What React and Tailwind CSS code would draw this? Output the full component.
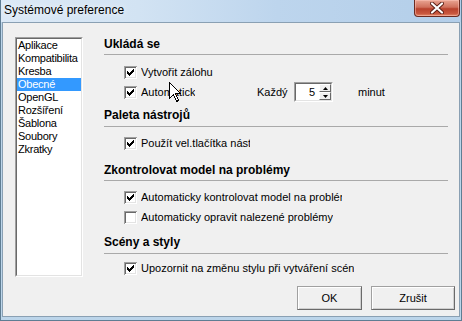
import React from "react";

const CHECK = [
  "......X",
  ".....XX",
  "X...XXX",
  "XX.XXX.",
  "XXXXX..",
  ".XXX...",
  "..X....",
];

function CheckBox({ checked }) {
  const rects = [];
  if (checked) {
    CHECK.forEach((row, y) =>
      row.split("").forEach((c, x) => {
        if (c === "X")
          rects.push(<rect key={`${x}-${y}`} x={3 + x} y={3 + y} width="1" height="1" fill="#000" />);
      })
    );
  }
  return (
    <svg width="13" height="13" viewBox="0 0 13 13" className="shrink-0" shapeRendering="crispEdges">
      <rect x="0" y="0" width="13" height="13" fill="#ffffff" />
      <path d="M0.5 12.5 V0.5 H12.5" stroke="#a0a0a0" fill="none" />
      <path d="M1.5 11.5 V1.5 H11.5" stroke="#696969" fill="none" />
      <path d="M1.5 11.5 H11.5 V1.5" stroke="#e3e3e3" fill="none" />
      {rects}
    </svg>
  );
}

function Heading({ children, mt, lineMt }) {
  return (
    <>
      <div className={`h-[14px] leading-[14px] text-[12px] font-bold whitespace-nowrap ${mt}`}>{children}</div>
      <div className={`h-px bg-[#a9a9a9] ${lineMt}`} />
    </>
  );
}

function Row({ checked, children, mt, labelW }) {
  return (
    <div className={`flex items-center h-[16px] pl-[20px] ${mt}`}>
      <CheckBox checked={checked} />
      <span className={`ml-[4px] leading-[16px] whitespace-nowrap overflow-hidden ${labelW}`}>{children}</span>
    </div>
  );
}

function Button({ children, w }) {
  return (
    <div
      className={`h-[24px] ${w} flex items-center justify-center bg-[#f0f0f0] border border-[#a0a0a0] border-r-[#6a6a6a] border-b-[#6a6a6a] shadow-[inset_1px_1px_0_#ffffff,inset_-1px_-1px_0_#cfcfcf]`}
    >
      {children}
    </div>
  );
}

export default function App() {
  const items = ["Aplikace", "Kompatibilita", "Kresba", "Obecné", "OpenGL", "Rozšíření", "Šablona", "Soubory", "Zkratky"];
  return (
    <div className="relative w-[462px] h-[321px] overflow-hidden flex flex-col border-l border-r border-b border-[#5f7d93] bg-[#bcd5ea] font-['Liberation_Sans',Arial,sans-serif] text-[11px] text-black">
      {/* Title bar */}
      <div className="h-[22px] shrink-0 flex justify-between bg-[linear-gradient(90deg,#dce9f6_0%,#d2e3f3_30%,#bdd5ed_60%,#b3cee9_100%)]">
        <div className="pl-[3px] h-[20px] flex items-center text-[12px] text-black [text-shadow:0_0_6px_#ffffff]">
          Systémové preference
        </div>
        <div className="mr-[1px] w-[46px] h-[17px] rounded-b-[4px] border border-t-0 border-[#6b2a20] bg-[linear-gradient(180deg,#e9a593_0%,#d0705c_45%,#b8412c_55%,#c9583f_85%,#e48c6a_100%)] flex items-center justify-center shadow-[inset_0_0_0_1px_rgba(255,200,190,0.5)]">
          <svg width="14" height="12" viewBox="0 0 14 12">
            <path d="M2 1.5 L12 10.5 M12 1.5 L2 10.5" stroke="#5a1d14" strokeWidth="4" strokeLinecap="round" />
            <path d="M2 1.5 L12 10.5 M12 1.5 L2 10.5" stroke="#ffffff" strokeWidth="2.2" strokeLinecap="round" />
          </svg>
        </div>
      </div>

      {/* Client area */}
      <div className="flex-1 mx-[1px] mb-[3px] border border-[#8aa0b3] bg-[#f0f0f0] flex flex-col">
        <div className="flex items-start pt-[14px] pl-[12px]">
          {/* List */}
          <div className="w-[68px] h-[240px] border border-[#a0a0a0] border-r-white border-b-white shrink-0">
            <div className="w-full h-full border border-[#696969] border-r-[#e3e3e3] border-b-[#e3e3e3] bg-white">
              {items.map((it) => (
                <div
                  key={it}
                  className={`h-[13px] leading-[13px] pl-[1px] tracking-[-0.25px] whitespace-nowrap ${it === "Obecné" ? "bg-[#3399ff] text-white" : ""}`}
                >
                  {it}
                </div>
              ))}
            </div>
          </div>

          {/* Right column */}
          <div className="ml-[21px] w-[344px] flex flex-col">
            <Heading mt="" lineMt="mt-[3px]">Ukládá se</Heading>
            <Row checked mt="mt-[9px]">Vytvořit zálohu</Row>
            <div className="flex items-center h-[20px] mt-[2px] pl-[20px]">
              <CheckBox checked />
              <span className="ml-[4px] w-[54px] overflow-hidden whitespace-nowrap leading-[16px]">Automaticky</span>
              <span className="ml-[62px] w-[37px] whitespace-nowrap">Každý</span>
              <div className="w-[39px] h-[20px] flex border border-[#a0a0a0] border-r-white border-b-white">
                <div className="flex-1 flex border border-[#696969] border-r-[#e3e3e3] border-b-[#e3e3e3] bg-white">
                  <div className="flex-1 text-right pr-[4px] leading-[16px]">5</div>
                  <div className="w-[12px] flex flex-col">
                    <div className="flex-1 flex items-center justify-center bg-[#f0f0f0] border border-white border-r-[#696969] border-b-[#696969]">
                      <svg width="5" height="3" viewBox="0 0 5 3"><path d="M2.5 0 L5 3 L0 3 Z" fill="#000" /></svg>
                    </div>
                    <div className="flex-1 flex items-center justify-center bg-[#f0f0f0] border border-white border-r-[#696969] border-b-[#696969]">
                      <svg width="5" height="3" viewBox="0 0 5 3"><path d="M0 0 L5 0 L2.5 3 Z" fill="#000" /></svg>
                    </div>
                  </div>
                </div>
              </div>
              <span className="ml-[25px] whitespace-nowrap">minut</span>
            </div>

            <Heading mt="mt-[6px]" lineMt="mt-[4px]">Paleta nástrojů</Heading>
            <Row checked mt="mt-[8px]" labelW="w-[109px]">Použít vel.tlačítka nástrojů</Row>

            <Heading mt="mt-[12px]" lineMt="mt-[3px]">Zkontrolovat model na problémy</Heading>
            <Row checked mt="mt-[8px]" labelW="w-[201px]">Automaticky kontrolovat model na problémy</Row>
            <Row mt="mt-[4px]">Automaticky opravit nalezené problémy</Row>

            <Heading mt="mt-[10px]" lineMt="mt-[4px]">Scény a styly</Heading>
            <Row checked mt="mt-[6px]">Upozornit na změnu stylu při vytváření scén</Row>
          </div>
        </div>

        <div className="flex justify-end pr-[4px] mt-[9px] gap-[9px]">
          <Button w="w-[65px]">OK</Button>
          <Button w="w-[84px]">Zrušit</Button>
        </div>
      </div>

      {/* Mouse cursor */}
      <svg className="absolute left-[168px] top-[82px]" width="13" height="21" viewBox="0 0 13 21" shapeRendering="crispEdges">
        <path
          d="M0.5 0.5 L0.5 16.5 L4.5 12.5 L7.5 19.5 L9.5 18.5 L6.5 11.5 L11.5 11.5 Z"
          fill="#ffffff"
          stroke="#000000"
          strokeWidth="1"
          strokeLinejoin="miter"
        />
      </svg>
    </div>
  );
}
